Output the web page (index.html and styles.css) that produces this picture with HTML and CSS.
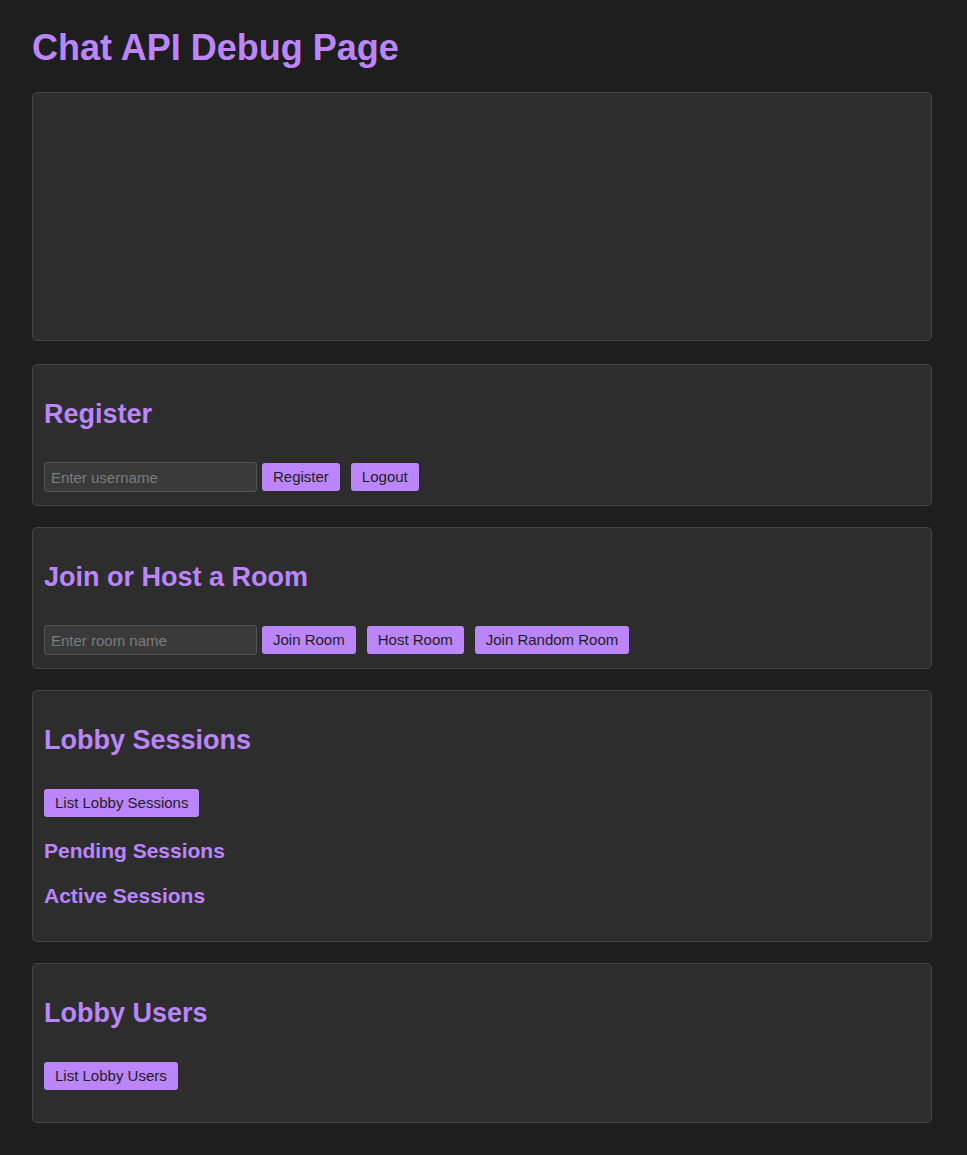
FILE: index.html
```html
<!DOCTYPE html>
<html lang="en">
<head>
<meta charset="utf-8">
<title>Chat API Debug Page</title>
<link rel="stylesheet" href="styles.css">
</head>
<body>
<div class="page">
  <h1 class="title">Chat API Debug Page</h1>

  <div class="panel log"></div>

  <section class="panel">
    <h2 class="heading">Register</h2>
    <div class="row">
      <input class="field" type="text" placeholder="Enter username">
      <button class="btn">Register</button>
      <button class="btn">Logout</button>
    </div>
  </section>

  <section class="panel">
    <h2 class="heading">Join or Host a Room</h2>
    <div class="row">
      <input class="field" type="text" placeholder="Enter room name">
      <button class="btn">Join Room</button>
      <button class="btn">Host Room</button>
      <button class="btn">Join Random Room</button>
    </div>
  </section>

  <section class="panel">
    <h2 class="heading">Lobby Sessions</h2>
    <div class="row">
      <button class="btn">List Lobby Sessions</button>
    </div>
    <h3 class="subheading">Pending Sessions</h3>
    <h3 class="subheading last">Active Sessions</h3>
  </section>

  <section class="panel">
    <h2 class="heading">Lobby Users</h2>
    <div class="row">
      <button class="btn">List Lobby Users</button>
    </div>
    <div class="list"></div>
  </section>
</div>
</body>
</html>
```

FILE: styles.css
```css
html, body {
  margin: 0;
  background: #1e1e1e;
}
body {
  font-family: "Liberation Sans", Arial, sans-serif;
  font-size: 18px;
  color: #bb86fc;
  padding: 27px 32px 20px;
}
.page {
  max-width: 900px;
}
.title {
  font-size: 36px;
  line-height: 41px;
  font-weight: bold;
  margin: 0 0 24px;
  color: #bb86fc;
}
.panel {
  display: block;
  background: #2d2d2d;
  border: 1px solid #444;
  border-radius: 5px;
  padding: 13px 11px 13px;
  margin-bottom: 21px;
}
.log {
  height: 247px;
  padding: 0;
  margin-bottom: 23px;
}
.panel.users {
  margin-top: 22px;
}
.heading {
  font-size: 27px;
  line-height: 32px;
  font-weight: bold;
  margin: 20px 0 32px;
}
.row {
  display: flex;
  align-items: center;
  height: 30px;
}
.field {
  box-sizing: border-box;
  width: 213px;
  height: 30px;
  background: #3a3a3a;
  border: 1px solid #555;
  border-radius: 3px;
  color: #ddd;
  font-family: "Liberation Sans", Arial, sans-serif;
  font-size: 15px;
  padding: 0 6px;
  margin-right: 5px;
  outline: none;
}
.field::placeholder {
  color: #7c7c7c;
}
.btn {
  box-sizing: border-box;
  height: 28px;
  background: #bb86fc;
  color: #1e1e1e;
  border: none;
  border-radius: 3px;
  font-family: "Liberation Sans", Arial, sans-serif;
  font-size: 15px;
  line-height: 18px;
  padding: 5px 11px;
  margin-right: 11px;
  cursor: pointer;
}
.subheading {
  font-size: 21px;
  line-height: 24px;
  font-weight: bold;
  margin: 21px 0;
}
.subheading.last {
  margin-bottom: 20px;
}
.list {
  height: 18px;
}
```
